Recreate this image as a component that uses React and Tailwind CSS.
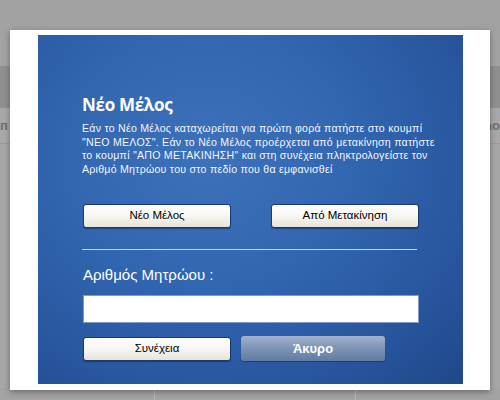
import React from 'react';

const font = { fontFamily: '"Liberation Sans", "DejaVu Sans", sans-serif' };

function Btn({ children }) {
  return (
    <button
      type="button"
      className="h-[24px] w-[148px] rounded-[3px] border border-[#1d3c6e] bg-gradient-to-b from-white via-[#f7f6f2] to-[#e6e3da] text-[11.5px] text-black shadow-[0_1px_1px_rgba(0,0,0,0.35)]"
    >
      {children}
    </button>
  );
}

export default function App() {
  return (
    <div className="relative h-[400px] w-[500px] overflow-hidden bg-[#a5a5a5]" style={font}>
      {/* page behind the overlay */}
      <div className="flex h-full flex-col">
        <div className="h-[66px] bg-[#a2a2a2]" />
        <div className="h-[42px] bg-[#8f8f8f]" />
        <div className="flex h-[36px] items-center justify-between border-b border-[#9a9a9a] bg-[#a8a8a8] text-[13px] font-bold text-[#6f6f6f]">
          <span>п</span>
          <span>no</span>
        </div>
        <div className="flex-1 bg-[#a6a6a6]" />
        <div className="flex h-[12px] bg-[#a3a3a3]">
          <div className="w-[155px] border-r border-[#b8b8b8]" />
          <div className="w-[201px] border-r border-[#b8b8b8]" />
        </div>
      </div>

      {/* modal */}
      <div className="absolute left-[10px] top-[30px] h-[360px] w-[480px] bg-white pl-[28px] pt-[5px] shadow-[0_2px_6px_rgba(0,0,0,0.35)]">
        <div className="h-[349px] w-[425px] bg-[radial-gradient(ellipse_at_40%_35%,#3d72bb_0%,#3266b0_40%,#28559e_75%,#1f4889_100%)] pl-[44px] pr-[30px] pt-[59px] text-white">
          <h1 className="text-[17px] font-bold leading-[22px] tracking-[-0.3px]" style={{ fontFamily: '"Open Sans", "DejaVu Sans", sans-serif' }}>
            Νέο Μέλος
          </h1>
          <p className="mt-[6px] whitespace-nowrap text-[10.6px] leading-[13.5px] tracking-[0.25px] text-[#f2f5fa]">
            Εάν το Νέο Μέλος καταχωρείται για πρώτη φορά πατήστε στο κουμπί
            <br />
            "ΝΕΟ ΜΕΛΟΣ". Εάν το Νέο Μέλος προέρχεται από μετακίνηση πατήστε
            <br />
            το κουμπί "ΑΠΟ ΜΕΤΑΚΙΝΗΣΗ" και στη συνέχεια πληκτρολογείστε τον
            <br />
            Αριθμό Μητρώου του στο πεδίο που θα εμφανισθεί
          </p>
          <div className="mt-[28px] flex w-[337px] justify-between pl-px">
            <Btn>Νέο Μέλος</Btn>
            <Btn>Από Μετακίνηση</Btn>
          </div>
          <div className="mt-[21px] h-px w-[335px] bg-[#c9d6ea]" />
          <div className="mt-[16px] pl-px text-[15px] leading-[18px]">Αριθμός Μητρώου :</div>
          <input
            type="text"
            className="ml-px mt-[11px] block h-[28px] w-[336px] border border-[#7f9cc9] bg-white outline-none"
          />
          <div className="mt-[14px] flex gap-[10px] pl-px">
            <Btn>Συνέχεια</Btn>
            <button
              type="button"
              className="-mt-px h-[25px] w-[144px] rounded-[3px] bg-gradient-to-b from-[#a1b3cc] via-[#7d93b5] to-[#627ba2] text-[13px] font-bold text-white shadow-[0_1px_1px_rgba(0,0,0,0.3)]"
            >
              Άκυρο
            </button>
          </div>
        </div>
      </div>
    </div>
  );
}
